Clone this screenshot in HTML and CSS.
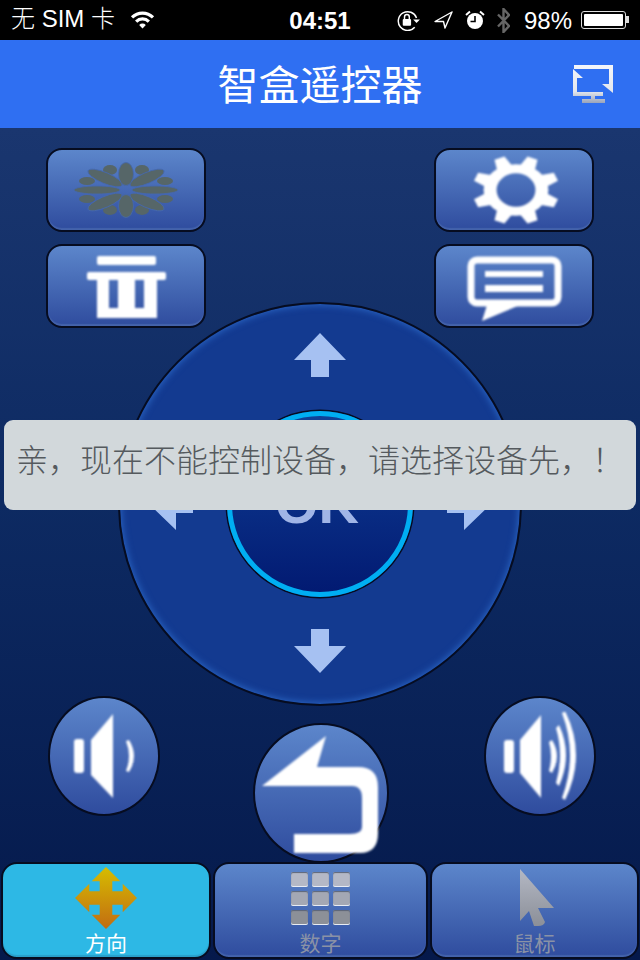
FILE: index.html
```html
<!DOCTYPE html>
<html lang="zh">
  <head>
    <meta charset="UTF-8" />
    <meta name="viewport" content="width=device-width, initial-scale=1.0" />
    <title>智盒遥控器</title>
    <link rel="stylesheet" href="styles.css">
  </head>
  <body>
    <div class="screen">
      <div class="status">
        <div class="status-left">
          <span class="carrier">无 SIM 卡</span>
          <svg class="wifi" width="25" height="18" viewBox="0 0 23 17">
            <path d="M1.6 6.1A14 14 0 0 1 21.4 6.1" fill="none" stroke="#fff" stroke-width="3"/>
            <path d="M5.5 10A8.5 8.5 0 0 1 17.5 10" fill="none" stroke="#fff" stroke-width="3"/>
            <path d="M11.5 16.5L8.4 13.2A4.4 4.4 0 0 1 14.6 13.2Z" fill="#fff"/>
          </svg>
        </div>
        <div class="time">04:51</div>
        <div class="status-right">
          <svg class="icon-lock" width="24" height="21" viewBox="0 0 23 20">
            <path d="M17 16.5A9 9 0 1 1 18.7 7.5" fill="none" stroke="#fff" stroke-width="1.4"/>
            <path d="M15.5 9H22L18.7 12.5Z" fill="#fff"/>
            <rect x="5.5" y="8.5" width="8" height="6.5" rx="1" fill="#fff"/>
            <path d="M7.2 8.5V6.6A2.3 2.3 0 0 1 11.8 6.6V8.5" fill="none" stroke="#fff" stroke-width="1.4"/>
          </svg>
          <svg width="19" height="18" viewBox="0 0 19 18">
            <path d="M18 1L1 10.5H9.5L11 17Z" fill="none" stroke="#fff" stroke-width="1.4" stroke-linejoin="round"/>
          </svg>
          <svg width="20" height="20" viewBox="0 0 20 20">
            <circle cx="10" cy="11" r="8" fill="#fff"/>
            <path d="M10 6V11.5H5.5" fill="none" stroke="#000" stroke-width="1.6"/>
            <path d="M1 5L5 1.5M19 5L15 1.5" stroke="#fff" stroke-width="2"/>
          </svg>
          <svg width="13" height="25" viewBox="0 0 13 25">
            <path d="M1 6.5L12 18L6.5 24V1L12 7L1 18.5" fill="none" stroke="#666" stroke-width="2.4"/>
          </svg>
          <span class="percent">98%</span>
          <div class="battery"><div class="battery-level"></div></div>
        </div>
      </div>

      <div class="header">
        <h1 class="title">智盒遥控器</h1>
        <svg class="cast" width="44" height="42" viewBox="571 63 44 42">
          <defs>
            <linearGradient id="silver" gradientUnits="userSpaceOnUse" x1="0" y1="65" x2="0" y2="103">
              <stop offset="0" stop-color="#f4f6fa"/>
              <stop offset="0.7" stop-color="#e2e6ee"/>
              <stop offset="1" stop-color="#9aa4ba"/>
            </linearGradient>
          </defs>
          <path fill="url(#silver)" d="M574 65H613V84H609V69H574ZM602 84H613V93ZM573 69L583 78H577V92H603V96H573ZM591 96H595V99H605V103H582V99H591Z"/>
        </svg>
      </div>

      <div class="remote">
        <div class="btn-row">
          <div class="btn">
            <svg width="112" height="60" viewBox="-56 -30 112 60" fill="#566668">
              <ellipse cx="-16" cy="-20" rx="7" ry="5"/>
              <ellipse cx="16" cy="-20" rx="7" ry="5"/>
              <ellipse cx="-16" cy="20" rx="7" ry="5"/>
              <ellipse cx="16" cy="20" rx="7" ry="5"/>
              <ellipse cx="-39" cy="-9" rx="8" ry="4"/>
              <ellipse cx="39" cy="-9" rx="8" ry="4"/>
              <ellipse cx="-39" cy="9" rx="8" ry="4"/>
              <ellipse cx="39" cy="9" rx="8" ry="4"/>
              <g stroke="#4468b0" stroke-width="0.8">
                <ellipse cx="-21" cy="-12" rx="18.5" ry="5.5" transform="rotate(23 -21 -12)"/>
                <ellipse cx="21" cy="-12" rx="18.5" ry="5.5" transform="rotate(-23 21 -12)"/>
                <ellipse cx="-21" cy="12" rx="18.5" ry="5.5" transform="rotate(-23 -21 12)"/>
                <ellipse cx="21" cy="12" rx="18.5" ry="5.5" transform="rotate(23 21 12)"/>
                <ellipse cx="-29" cy="0" rx="23" ry="4"/>
                <ellipse cx="29" cy="0" rx="23" ry="4"/>
                <ellipse cx="0" cy="-16" rx="7.5" ry="11.5"/>
                <ellipse cx="0" cy="16" rx="7.5" ry="11.5"/>
              </g>
            </svg>
          </div>
          <div class="btn">
            <svg class="soft gear" width="92" height="76" viewBox="-46 -38 92 76" fill="#fff">
              <g transform="scale(1.08 .86)">
                <path fill-rule="evenodd" d="M-30 0A30 30 0 1 0 30 0A30 30 0 1 0 -30 0ZM-18 0A18 19.5 0 1 1 18 0A18 19.5 0 1 1 -18 0Z"/>
                <path d="M-7.5 -27L-5 -40H5L7.5 -27Z" transform="rotate(22.5)"/>
                <path d="M-7.5 -27L-5 -40H5L7.5 -27Z" transform="rotate(67.5)"/>
                <path d="M-7.5 -27L-5 -40H5L7.5 -27Z" transform="rotate(112.5)"/>
                <path d="M-7.5 -27L-5 -40H5L7.5 -27Z" transform="rotate(157.5)"/>
                <path d="M-7.5 -27L-5 -40H5L7.5 -27Z" transform="rotate(202.5)"/>
                <path d="M-7.5 -27L-5 -40H5L7.5 -27Z" transform="rotate(247.5)"/>
                <path d="M-7.5 -27L-5 -40H5L7.5 -27Z" transform="rotate(292.5)"/>
                <path d="M-7.5 -27L-5 -40H5L7.5 -27Z" transform="rotate(337.5)"/>
              </g>
            </svg>
          </div>
        </div>
        <div class="btn-row">
          <div class="btn">
            <svg class="soft" width="84" height="64" viewBox="84 254 84 64" fill="#fff">
              <rect x="97" y="256" width="59" height="9" rx="2"/>
              <rect x="87" y="272" width="79" height="8" rx="2"/>
              <path d="M97 280H157V319H97ZM109 280V308H118V280ZM135 280V308H144V280Z" fill-rule="evenodd"/>
            </svg>
          </div>
          <div class="btn">
            <svg class="soft" width="100" height="72" viewBox="464 250 100 72" fill="#fff">
              <rect x="471" y="260" width="87" height="43" rx="6" fill="none" stroke="#fff" stroke-width="7"/>
              <rect x="485" y="271" width="58" height="6"/>
              <rect x="485" y="285" width="58" height="7"/>
              <path d="M487 305L482 321L520 305Z"/>
            </svg>
          </div>
        </div>

        <div class="dial">
          <svg class="arrow arrow-up" width="52" height="44" viewBox="0 0 52 44">
            <path d="M26 0L52 27H35V44H17V27H0Z"/>
          </svg>
          <svg class="arrow arrow-left" width="44" height="52" viewBox="0 0 44 52">
            <path d="M0 26L27 0V17H44V35H27V52Z"/>
          </svg>
          <div class="ok"><span class="ok-text">OK</span></div>
          <svg class="arrow arrow-right" width="44" height="52" viewBox="0 0 44 52">
            <path d="M44 26L17 0V17H0V35H17V52Z"/>
          </svg>
          <svg class="arrow arrow-down" width="52" height="44" viewBox="0 0 52 44">
            <path d="M26 44L52 17H35V0H17V17H0Z"/>
          </svg>
        </div>

        <div class="vol-row">
          <div class="round vol">
            <svg class="soft" width="68" height="88" viewBox="70 712 68 88" fill="#fff">
              <rect x="74" y="739" width="10" height="34" rx="3"/>
              <path d="M91 740L113 714V798L91 775Z"/>
              <path d="M126 741L129 740Q139 756 129 772L126 771Q132 756 126 741Z"/>
            </svg>
          </div>
          <div class="round back">
            <svg class="soft" width="120" height="120" viewBox="261 733 120 120" fill="#fff">
              <path d="M262 786L326 736L317 767H358Q378 767 378 787V833Q378 853 360 853H294V834H350Q362 834 362 827V798Q362 786 352 786Z"/>
            </svg>
          </div>
          <div class="round vol">
            <svg class="soft" width="76" height="88" viewBox="502 712 76 88" fill="#fff">
              <rect x="504" y="740" width="10" height="33" rx="3"/>
              <path d="M520 740L541 715V798L520 773Z"/>
              <path d="M549 742L552 740Q562 756 552 773L549 771Q553 756 549 742Z"/>
              <path d="M556 728L559 725Q573 755 559 786L556 783Q564 755 556 728Z"/>
              <path d="M562 713L565 711Q587 755 565 800L562 798Q578 755 562 713Z"/>
            </svg>
          </div>
        </div>

        <div class="tabs">
          <div class="tab tab-active">
            <div class="tab-icon">
              <svg width="62" height="62" viewBox="-31 -31 62 62">
                <defs>
                  <linearGradient id="gold" x1="0" y1="0" x2="0" y2="1">
                    <stop offset="0" stop-color="#d6bd00"/>
                    <stop offset="1" stop-color="#c26c12"/>
                  </linearGradient>
                </defs>
                <path fill="url(#gold)" d="M0 -31L14.3 -16.7H6.3V-6.7H16.7V-14.3L31 0L16.7 14.3V6.7H6.3V16.7H14.3L0 31L-14.3 16.7H-6.3V6.7H-16.7V14.3L-31 0L-16.7 -14.3V-6.7H-6.3V-16.7H-14.3Z"/>
              </svg>
            </div>
            <span class="tab-label">方向</span>
          </div>
          <div class="tab">
            <div class="tab-icon">
              <div class="keys">
                <div class="key"></div>
                <div class="key"></div>
                <div class="key"></div>
                <div class="key key-mid"></div>
                <div class="key key-mid"></div>
                <div class="key key-mid"></div>
                <div class="key key-low"></div>
                <div class="key key-low"></div>
                <div class="key key-low"></div>
              </div>
            </div>
            <span class="tab-label">数字</span>
          </div>
          <div class="tab">
            <div class="tab-icon">
              <svg class="pointer" width="36" height="58" viewBox="519 870 36 58">
                <defs>
                  <linearGradient id="grey" x1="0" y1="0" x2="0" y2="1">
                    <stop offset="0" stop-color="#b4b8c4"/>
                    <stop offset="1" stop-color="#8b8f98"/>
                  </linearGradient>
                </defs>
                <path fill="url(#grey)" d="M520 870L554 909H538L545 923Q544 927 538 927H534L529 912L520 922Z"/>
              </svg>
            </div>
            <span class="tab-label">鼠标</span>
          </div>
        </div>
      </div>

      <div class="toast">亲，现在不能控制设备，请选择设备先，！</div>
    </div>
  </body>
</html>
```

FILE: styles.css
```css
html,
body {
  margin: 0;
  background: #000;
}
.screen {
  position: relative;
  display: flex;
  flex-direction: column;
  width: 640px;
  height: 960px;
  overflow: hidden;
  font-family: "Noto Sans CJK SC", sans-serif;
}

/* status bar */
.status {
  display: grid;
  grid-template-columns: 1fr auto 1fr;
  align-items: center;
  height: 40px;
  background: #000;
  color: #fff;
  font-family: "Liberation Sans", "Noto Sans CJK SC", sans-serif;
  font-size: 24px;
}
.status-left {
  display: flex;
  align-items: center;
  gap: 15px;
  padding-left: 11px;
  font-weight: 300;
}
.carrier {
  line-height: 24px;
  margin-top: -2px;
}
.time {
  font-weight: bold;
  margin-top: 1px;
}
.status-right {
  display: flex;
  align-items: center;
  justify-content: flex-end;
  gap: 12px;
  padding-right: 11px;
}
.icon-lock {
  margin-right: 1px;
}
.percent {
  margin: 2px -3px 0 2px;
}
.battery {
  position: relative;
  box-sizing: border-box;
  width: 45px;
  height: 18px;
  margin-right: 3px;
  padding: 2px;
  border: 1px solid #ddd;
  border-radius: 3px;
}
.battery::after {
  content: "";
  position: absolute;
  top: 4px;
  right: -4px;
  width: 3px;
  height: 7px;
  background: #ddd;
}
.battery-level {
  height: 100%;
  background: #fff;
  border-radius: 1px;
}

/* title bar */
.header {
  display: flex;
  align-items: center;
  justify-content: center;
  position: relative;
  flex-shrink: 0;
  height: 88px;
  background: #2f6ff2;
}
.title {
  margin: 0 0 4px;
  color: #fff;
  font-size: 41px;
  font-weight: 400;
  line-height: 84px;
}
.cast {
  position: absolute;
  top: 23px;
  right: 25px;
  filter: blur(0.4px);
}

/* remote */
.remote {
  flex: 1;
  padding-top: 20px;
  background: linear-gradient(#1a366f, #0d2a62 45%, #05194b);
}
.btn-row {
  display: flex;
  justify-content: space-between;
  padding: 0 46px;
  margin-bottom: 12px;
}
.btn {
  display: flex;
  align-items: center;
  justify-content: center;
  box-sizing: border-box;
  width: 160px;
  height: 84px;
  border: 2px solid #060c20;
  border-radius: 16px;
  background: linear-gradient(#5c86cb, #2f4c9e);
  box-shadow: inset 0 -2px 1px #4463ab;
}
.soft {
  filter: blur(0.8px);
}
.gear {
  margin-left: 3px;
}

.dial {
  display: grid;
  grid-template-columns: 1fr 186px 1fr;
  grid-template-rows: 1fr 186px 1fr;
  place-items: center;
  box-sizing: border-box;
  position: relative;
  width: 404px;
  height: 404px;
  margin: -38px auto 0;
  border: 2px solid #060c20;
  border-radius: 50%;
  background: #133a90;
  box-shadow: inset 0 0 7px 1px #2b66c4;
}
.arrow {
  fill: #a6c1f2;
}
.arrow-up {
  grid-area: 1 / 2;
  margin-bottom: 6px;
}
.arrow-left {
  grid-area: 2 / 1;
  margin-right: 6px;
}
.arrow-right {
  grid-area: 2 / 3;
  margin-left: 4px;
}
.arrow-down {
  grid-area: 3 / 2;
}
.ok {
  grid-area: 2 / 2;
  display: flex;
  align-items: center;
  justify-content: center;
  box-sizing: border-box;
  width: 186px;
  height: 186px;
  border: 5px solid #00aef2;
  border-radius: 50%;
  background: linear-gradient(#104197, #021a72);
  box-shadow: 0 0 0 1.5px #060c20;
  color: #a0b5e6;
  font-family: "Liberation Sans", sans-serif;
  font-size: 56px;
  font-weight: bold;
}
.ok-text {
  margin: 0 6px 1px 0;
}

.vol-row {
  display: flex;
  justify-content: space-between;
  align-items: flex-start;
  padding: 0 44px 0 48px;
  margin-top: -10px;
}
.round {
  display: flex;
  align-items: center;
  justify-content: center;
  box-sizing: border-box;
  border: 2px solid #060c20;
  border-radius: 50%;
  background: linear-gradient(#5c86cb, #2f4c9e);
}
.vol {
  width: 112px;
  height: 120px;
}
.back {
  width: 136px;
  height: 140px;
  margin: 27px 0 0 -2px;
}

/* bottom tabs */
.tabs {
  display: grid;
  grid-template-columns: 210px 215px 209px;
  gap: 2px;
  position: relative;
  margin-top: -1px;
  padding: 0 1px;
}
.tab {
  display: flex;
  flex-direction: column;
  align-items: center;
  box-sizing: border-box;
  height: 97px;
  padding-top: 3px;
  border: 2px solid #060c20;
  border-radius: 16px;
  background: linear-gradient(#5c86cb, #2f4c9e);
  box-shadow: inset 0 -2px 1px #4463ab;
  color: #8a92a6;
}
.tab-active {
  background: #2db8e5;
  box-shadow: inset 0 -2px 1px #2a9fcb;
  color: #fff;
}
.tab-icon {
  display: flex;
  align-items: center;
  justify-content: center;
  height: 62px;
}
.tab-label {
  margin-top: 1px;
  font-size: 21px;
  line-height: 24px;
}
.keys {
  display: grid;
  grid-template-columns: repeat(3, 17px);
  grid-auto-rows: 15px;
  gap: 4px;
}
.key {
  border-radius: 2px;
  background: #b4b8c6;
  box-shadow: inset 0 1px 1px #5a6478, inset 0 -1px 0 #e8ecf4;
}
.key-mid {
  background: #a4a8b4;
}
.key-low {
  background: #8c9098;
}
.pointer {
  margin-left: 4px;
}

/* message over the remote */
.toast {
  position: absolute;
  top: 420px;
  left: 4px;
  right: 4px;
  box-sizing: border-box;
  height: 90px;
  padding: 14px 0 0 12px;
  border-radius: 9px;
  background: #d2d8db;
  color: #555a5e;
  font-size: 32px;
  font-weight: 300;
  line-height: 48px;
  white-space: nowrap;
}
```
